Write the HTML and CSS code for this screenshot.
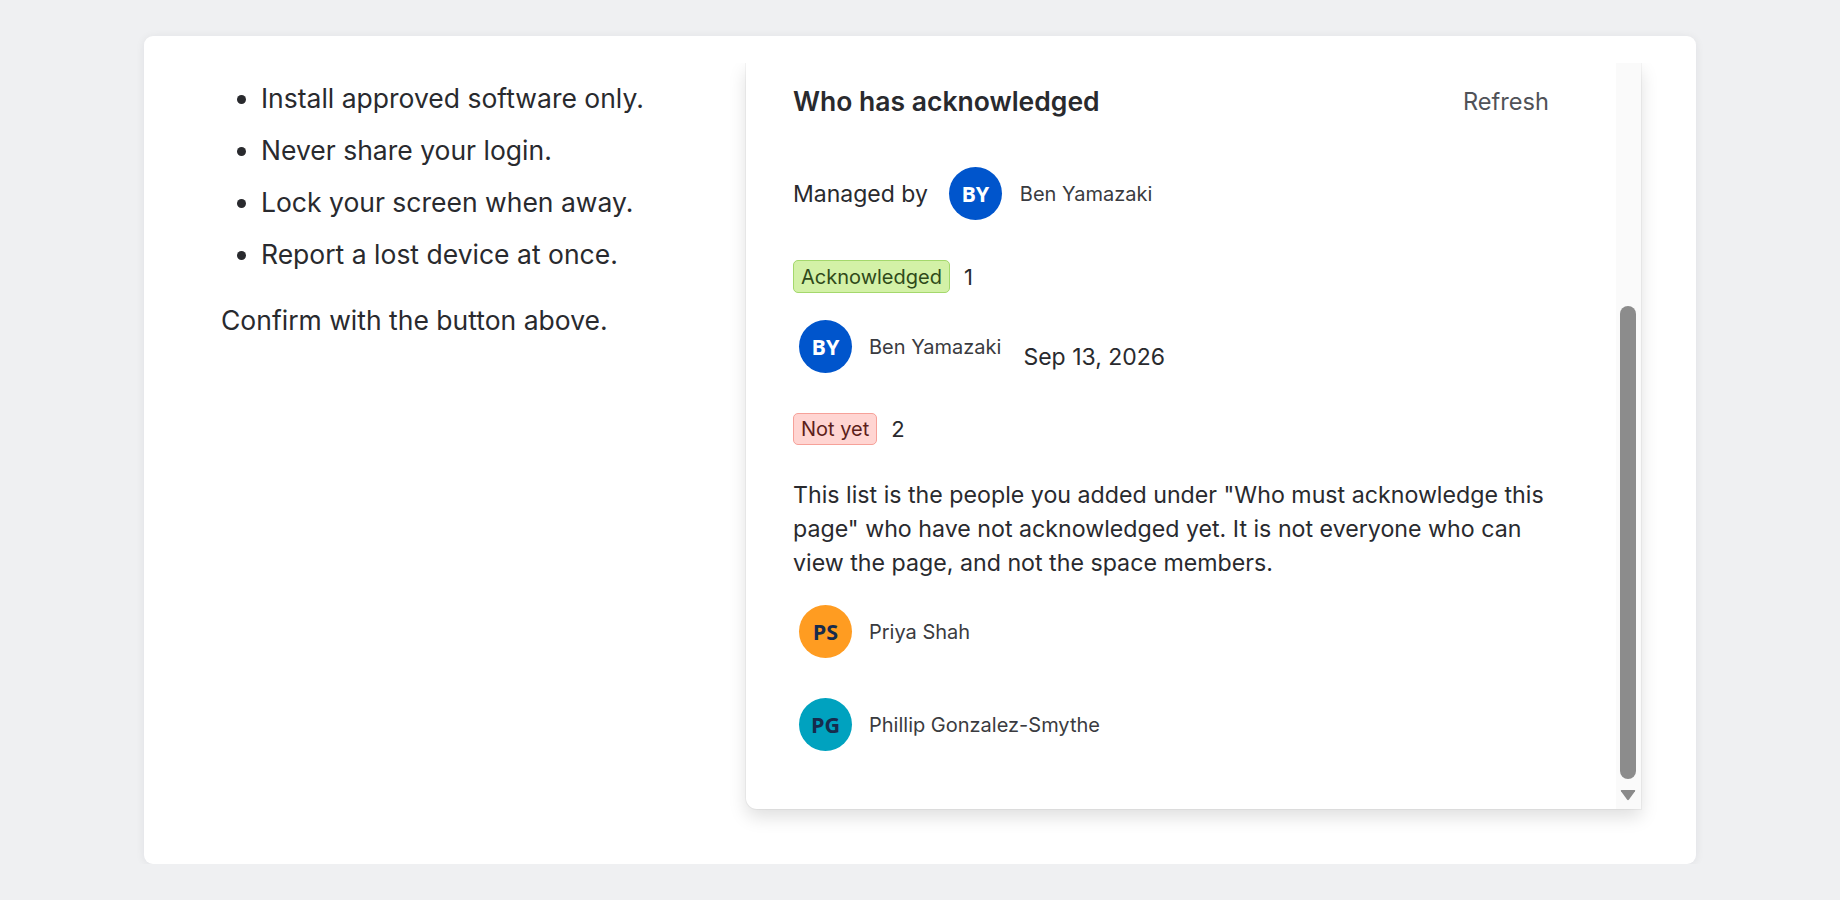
FILE: index.html
```html
<!DOCTYPE html>
<html lang="en">
<head>
    <meta charset="UTF-8">
    <meta name="viewport" content="width=device-width, initial-scale=1.0">
    <title>Acknowledgements</title>
    <link rel="stylesheet" href="styles.css">
</head>
<body>
    <main class="page">
        <div class="card">
            <div class="doc">
                <ul class="rules">
                    <li>Install approved software only.</li>
                    <li>Never share your login.</li>
                    <li>Lock your screen when away.</li>
                    <li>Report a lost device at once.</li>
                </ul>
                <p>Confirm with the button above.</p>
            </div>
            <div class="popover-clip">
                <div class="popover">
                    <div class="popover-body">
                        <div class="popover-head">
                            <h2>Who has acknowledged</h2>
                            <button class="refresh">Refresh</button>
                        </div>
                        <div class="managed">
                            <span class="managed-label">Managed by</span>
                            <span class="avatar av-blue">BY</span>
                            <span class="name">Ben Yamazaki</span>
                        </div>
                        <div class="status">
                            <span class="lozenge lozenge-done">Acknowledged</span>
                            <span class="count">1</span>
                        </div>
                        <div class="person">
                            <span class="avatar av-blue">BY</span>
                            <span class="name">Ben Yamazaki</span>
                            <span class="date">Sep 13, 2026</span>
                        </div>
                        <div class="status status-pending">
                            <span class="lozenge lozenge-missing">Not yet</span>
                            <span class="count">2</span>
                        </div>
                        <p class="note">This list is the people you added under "Who must acknowledge this page" who have not acknowledged yet. It is not everyone who can view the page, and not the space members.</p>
                        <div class="person person-first">
                            <span class="avatar av-orange">PS</span>
                            <span class="name">Priya Shah</span>
                        </div>
                        <div class="person person-next">
                            <span class="avatar av-teal">PG</span>
                            <span class="name">Phillip Gonzalez-Smythe</span>
                        </div>
                    </div>
                    <div class="scrollbar">
                        <div class="thumb"></div>
                        <svg class="arrow-down" width="16" height="12" viewBox="0 0 16 12">
                            <path d="M1.5 1 H14.5 Q15.8 1 15 2.2 L9 10.5 Q8 11.8 7 10.5 L1 2.2 Q0.2 1 1.5 1 Z" fill="#8a8a8a"/>
                        </svg>
                    </div>
                </div>
            </div>
        </div>
    </main>
</body>
</html>
```

FILE: styles.css
```css
body, html {
    margin: 0;
    padding: 0;
    font-family: Inter, "Noto Sans", sans-serif;
    background-color: #eff0f2;
    color: #292a2e;
}

.page {
    padding-top: 36px;
}

.card {
    display: flex;
    width: 1552px;
    height: 828px;
    box-sizing: border-box;
    margin: 0 auto;
    padding: 27px 31px 29px 77px;
    background-color: #ffffff;
    border-radius: 9px;
    box-shadow: 0 1px 10px rgba(20, 24, 40, 0.07);
}

/* left column: page text */
.doc {
    width: 501px;
    flex-shrink: 0;
    font-size: 26.5px;
    line-height: 36px;
}

.rules {
    margin: 17px 0 30px;
    padding-left: 40px;
}

.rules li + li {
    margin-top: 16px;
}

.doc p {
    margin: 0;
}

/* right column: acknowledgement popover */
.popover-clip {
    flex: 1;
    overflow: hidden;
    padding: 0 24px 26px;
}

.popover {
    display: flex;
    height: 746px;
    background-color: #ffffff;
    border-radius: 0 0 0 11px;
    box-shadow: 0 0 0 1px rgba(0, 0, 0, 0.04), 0 8px 18px rgba(0, 0, 0, 0.13);
    overflow: hidden;
}

.popover-body {
    flex: 1;
    padding: 21px 47px 0;
}

.popover-head {
    display: flex;
    align-items: center;
    justify-content: space-between;
}

.popover-head h2 {
    margin: 0;
    font-size: 26.5px;
    line-height: 34px;
    font-weight: 600;
}

.refresh {
    background: none;
    border: none;
    padding: 0 0 0 20px;
    margin-right: 20px;
    font-family: inherit;
    font-size: 23.6px;
    color: #505258;
    cursor: pointer;
}

.managed {
    display: flex;
    align-items: center;
    margin-top: 49px;
}

.managed-label {
    font-size: 23px;
    margin-right: 21px;
}

.avatar {
    display: flex;
    align-items: center;
    justify-content: center;
    width: 53px;
    height: 53px;
    border-radius: 50%;
    flex-shrink: 0;
    font-family: "Open Sans", "Noto Sans", sans-serif;
    font-weight: 700;
    font-size: 21.5px;
    margin-right: 17px;
}

.av-blue {
    background-color: #0055cc;
    color: #ffffff;
}

.av-orange {
    background-color: #ff9c21;
    color: #172b4d;
}

.av-teal {
    background-color: #00a2bf;
    color: #172b4d;
}

.name {
    font-size: 20px;
    color: #3a3b40;
}

.managed .avatar {
    margin-right: 18px;
}

.status {
    display: flex;
    align-items: center;
    margin-top: 40px;
}

.lozenge {
    box-sizing: border-box;
    height: 33px;
    padding: 0 7px;
    display: flex;
    align-items: center;
    font-size: 20px;
    border-radius: 5px;
}

.lozenge-done {
    background-color: #d3f1a7;
    border: 1.5px solid #a4d86c;
    color: #2f4a1a;
}

.lozenge-missing {
    background-color: #ffd5d2;
    border: 1.5px solid #f6a199;
    color: #5d1f1a;
    height: 32px;
}

.count {
    font-size: 22px;
    margin-left: 14px;
}

.person {
    display: flex;
    align-items: center;
    padding-left: 6px;
    margin-top: 27px;
}

.date {
    font-size: 23px;
    margin-left: 22px;
    margin-top: 20px;
}

.note {
    margin: 33px 0 0;
    font-size: 23.2px;
    line-height: 34px;
}

.person-first {
    margin-top: 25px;
}

.person-next {
    margin-top: 40px;
}

/* painted scrollbar */
.scrollbar {
    width: 25px;
    flex-shrink: 0;
    background-color: #fafafa;
    padding-top: 243px;
    box-sizing: border-box;
}

.thumb {
    width: 16px;
    height: 473px;
    margin-left: 4px;
    border-radius: 8px;
    background-color: #8c8c8c;
}

.arrow-down {
    display: block;
    margin: 10px 0 0 4px;
}
```
